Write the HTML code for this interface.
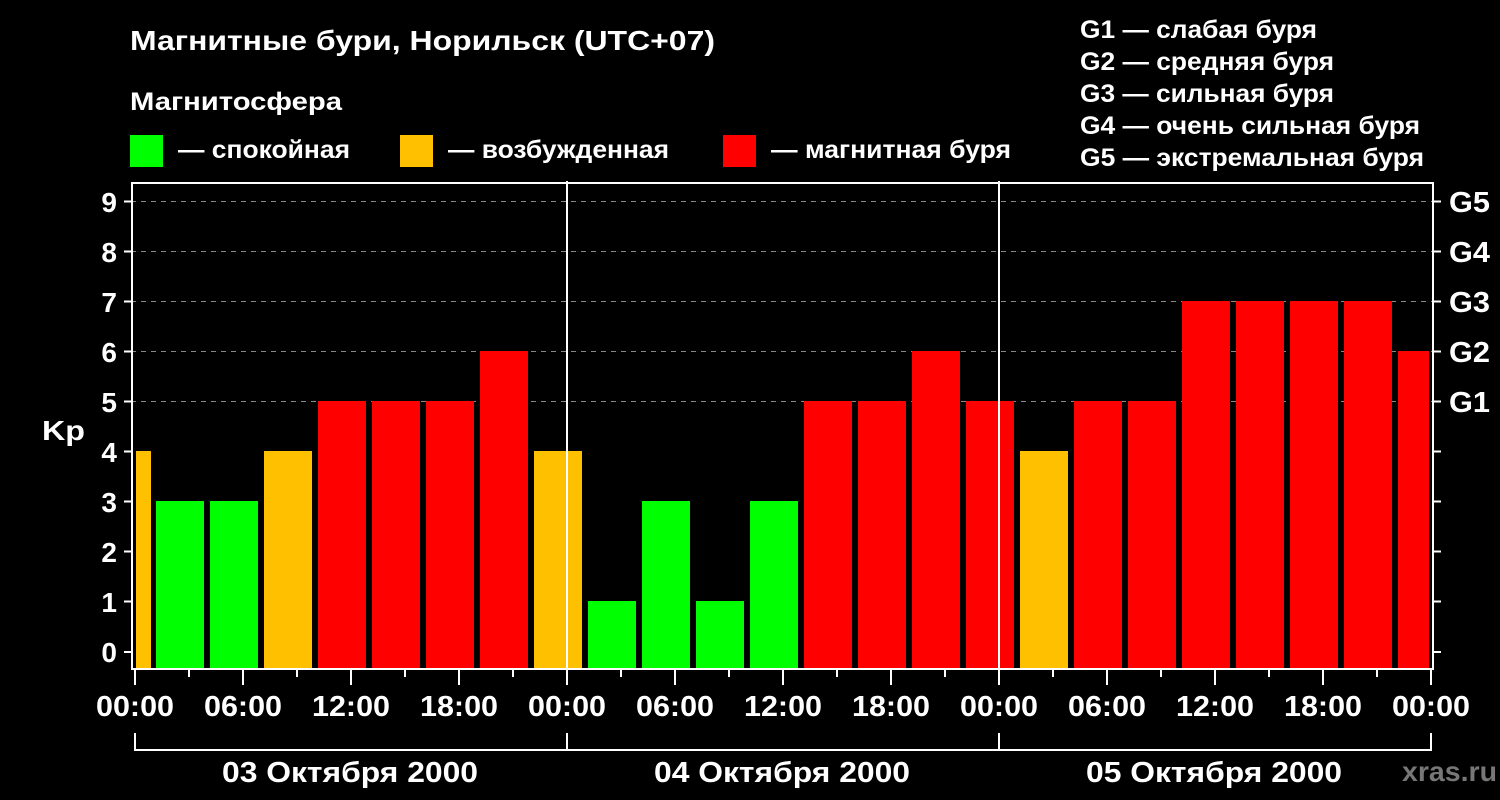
<!DOCTYPE html>
<html><head><meta charset="utf-8"><style>
html,body{margin:0;padding:0;background:#000;width:1500px;height:800px;overflow:hidden}
svg text{font-family:"Liberation Sans",sans-serif;font-weight:bold;fill:#fff}
</style></head><body>
<svg width="1500" height="800" xmlns="http://www.w3.org/2000/svg">
<rect width="1500" height="800" fill="#000"/>
<text x="130" y="50" font-size="28" textLength="585" lengthAdjust="spacingAndGlyphs">Магнитные бури, Норильск (UTC+07)</text>
<text x="130" y="110" font-size="25" textLength="212" lengthAdjust="spacingAndGlyphs">Магнитосфера</text>
<rect x="130" y="135" width="33" height="32" fill="#00ff00"/>
<text x="178" y="158" font-size="25" textLength="172" lengthAdjust="spacingAndGlyphs">— спокойная</text>
<rect x="400" y="135" width="33" height="32" fill="#ffc000"/>
<text x="448" y="158" font-size="25" textLength="221" lengthAdjust="spacingAndGlyphs">— возбужденная</text>
<rect x="723" y="135" width="33" height="32" fill="#ff0000"/>
<text x="771" y="158" font-size="25" textLength="240" lengthAdjust="spacingAndGlyphs">— магнитная буря</text>
<g font-size="25">
<text x="1080" y="38" textLength="237" lengthAdjust="spacingAndGlyphs">G1 — слабая буря</text>
<text x="1080" y="70" textLength="254" lengthAdjust="spacingAndGlyphs">G2 — средняя буря</text>
<text x="1080" y="102" textLength="254" lengthAdjust="spacingAndGlyphs">G3 — сильная буря</text>
<text x="1080" y="134" textLength="340" lengthAdjust="spacingAndGlyphs">G4 — очень сильная буря</text>
<text x="1080" y="166" textLength="344" lengthAdjust="spacingAndGlyphs">G5 — экстремальная буря</text>
</g>
<g stroke="#888" stroke-width="1" stroke-dasharray="5,5">
<line x1="131" y1="201.5" x2="1433" y2="201.5"/>
<line x1="131" y1="251.5" x2="1433" y2="251.5"/>
<line x1="131" y1="301.5" x2="1433" y2="301.5"/>
<line x1="131" y1="351.5" x2="1433" y2="351.5"/>
<line x1="131" y1="401.5" x2="1433" y2="401.5"/>
</g>
<g>
<rect x="136" y="451" width="15" height="217" fill="#ffc000"/>
<rect x="156" y="501" width="48" height="167" fill="#00ff00"/>
<rect x="210" y="501" width="48" height="167" fill="#00ff00"/>
<rect x="264" y="451" width="48" height="217" fill="#ffc000"/>
<rect x="318" y="401" width="48" height="267" fill="#ff0000"/>
<rect x="372" y="401" width="48" height="267" fill="#ff0000"/>
<rect x="426" y="401" width="48" height="267" fill="#ff0000"/>
<rect x="480" y="351" width="48" height="317" fill="#ff0000"/>
<rect x="534" y="451" width="48" height="217" fill="#ffc000"/>
<rect x="588" y="601" width="48" height="67" fill="#00ff00"/>
<rect x="642" y="501" width="48" height="167" fill="#00ff00"/>
<rect x="696" y="601" width="48" height="67" fill="#00ff00"/>
<rect x="750" y="501" width="48" height="167" fill="#00ff00"/>
<rect x="804" y="401" width="48" height="267" fill="#ff0000"/>
<rect x="858" y="401" width="48" height="267" fill="#ff0000"/>
<rect x="912" y="351" width="48" height="317" fill="#ff0000"/>
<rect x="966" y="401" width="48" height="267" fill="#ff0000"/>
<rect x="1020" y="451" width="48" height="217" fill="#ffc000"/>
<rect x="1074" y="401" width="48" height="267" fill="#ff0000"/>
<rect x="1128" y="401" width="48" height="267" fill="#ff0000"/>
<rect x="1182" y="301" width="48" height="367" fill="#ff0000"/>
<rect x="1236" y="301" width="48" height="367" fill="#ff0000"/>
<rect x="1290" y="301" width="48" height="367" fill="#ff0000"/>
<rect x="1344" y="301" width="48" height="367" fill="#ff0000"/>
<rect x="1398" y="351" width="31" height="317" fill="#ff0000"/>
</g>
<g stroke="#fff" stroke-width="2" fill="none">
<rect x="132" y="183" width="1301" height="486"/>
<line x1="567" y1="181" x2="567" y2="669"/>
<line x1="999" y1="181" x2="999" y2="669"/>
<path d="M124 201.5h8M124 251.5h8M124 301.5h8M124 351.5h8M124 401.5h8M124 451.5h8M124 501.5h8M124 551.5h8M124 601.5h8M124 652h8"/>
<path d="M1433 201.5h8M1433 251.5h8M1433 301.5h8M1433 351.5h8M1433 401.5h8M1433 451.5h8M1433 501.5h8M1433 551.5h8M1433 601.5h8M1433 652h8"/>
<path d="M135 669v16M189 669v8M243 669v16M297 669v8M351 669v16M405 669v8M459 669v16M513 669v8M567 669v16M621 669v8M675 669v16M729 669v8M783 669v16M837 669v8M891 669v16M945 669v8M999 669v16M1053 669v8M1107 669v16M1161 669v8M1215 669v16M1269 669v8M1323 669v16M1377 669v8M1431 669v16"/>
<path d="M135 733v17h1296v-17M567 733v17M999 733v17"/>
</g>
<g font-size="28" text-anchor="end">
<text x="117" y="212">9</text><text x="117" y="262">8</text><text x="117" y="312">7</text><text x="117" y="362">6</text><text x="117" y="412">5</text><text x="117" y="462">4</text><text x="117" y="512">3</text><text x="117" y="562">2</text><text x="117" y="612">1</text><text x="117" y="662">0</text>
</g>
<text x="42" y="440" font-size="28" textLength="43" lengthAdjust="spacingAndGlyphs">Kp</text>
<g font-size="29">
<text x="1449" y="212" textLength="41" lengthAdjust="spacingAndGlyphs">G5</text><text x="1449" y="262" textLength="41" lengthAdjust="spacingAndGlyphs">G4</text><text x="1449" y="312" textLength="41" lengthAdjust="spacingAndGlyphs">G3</text><text x="1449" y="362" textLength="41" lengthAdjust="spacingAndGlyphs">G2</text><text x="1449" y="412" textLength="41" lengthAdjust="spacingAndGlyphs">G1</text>
</g>
<g font-size="29" text-anchor="middle">
<text x="135" y="716" textLength="78" lengthAdjust="spacingAndGlyphs">00:00</text><text x="243" y="716" textLength="78" lengthAdjust="spacingAndGlyphs">06:00</text><text x="351" y="716" textLength="78" lengthAdjust="spacingAndGlyphs">12:00</text><text x="459" y="716" textLength="78" lengthAdjust="spacingAndGlyphs">18:00</text>
<text x="567" y="716" textLength="78" lengthAdjust="spacingAndGlyphs">00:00</text><text x="675" y="716" textLength="78" lengthAdjust="spacingAndGlyphs">06:00</text><text x="783" y="716" textLength="78" lengthAdjust="spacingAndGlyphs">12:00</text><text x="891" y="716" textLength="78" lengthAdjust="spacingAndGlyphs">18:00</text>
<text x="999" y="716" textLength="78" lengthAdjust="spacingAndGlyphs">00:00</text><text x="1107" y="716" textLength="78" lengthAdjust="spacingAndGlyphs">06:00</text><text x="1215" y="716" textLength="78" lengthAdjust="spacingAndGlyphs">12:00</text><text x="1323" y="716" textLength="78" lengthAdjust="spacingAndGlyphs">18:00</text>
<text x="1431" y="716" textLength="78" lengthAdjust="spacingAndGlyphs">00:00</text>
<text x="350" y="782" textLength="256" lengthAdjust="spacingAndGlyphs">03 Октября 2000</text>
<text x="782" y="782" textLength="256" lengthAdjust="spacingAndGlyphs">04 Октября 2000</text>
<text x="1214" y="782" textLength="256" lengthAdjust="spacingAndGlyphs">05 Октября 2000</text>
</g>
<text x="1402" y="781" font-size="28" textLength="95" lengthAdjust="spacingAndGlyphs" style="fill:#777">xras.ru</text>
</svg>
</body></html>
